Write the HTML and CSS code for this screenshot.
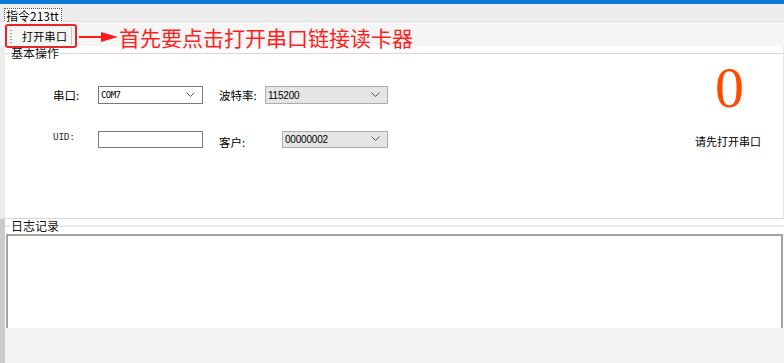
FILE: index.html
```html
<!DOCTYPE html>
<html>
<head>
<meta charset="utf-8">
<link rel="stylesheet" href="styles.css">
</head>
<body>
<div class="window">
  <div class="titlebar"></div>
  <div class="tabstrip"><div class="tab">指令213tt</div></div>
  <div class="toolbar">
    <div class="annot-box"><span class="grip"></span><span class="btn">打开串口</span></div>
    <svg class="arrow" width="40" height="12" viewBox="0 0 40 12"><line x1="0" y1="6" x2="26" y2="6" stroke="#ff1a1a" stroke-width="2"/><polygon points="22,1 39,6 22,11" fill="#ff1a1a"/></svg>
    <span class="annot-text">首先要点击打开串口链接读卡器</span>
  </div>
  <div class="group basic">
    <div class="legend"><span class="legend-text">基本操作</span></div>
    <div class="basic-content">
      <div class="form">
        <div class="row row1">
          <span class="label l1">串口:</span>
          <div class="combo white w1"><span>COM7</span><svg class="chev" width="9" height="6" viewBox="0 0 9 6"><polyline points="0.5,0.5 4.5,4.5 8.5,0.5" fill="none" stroke="#555" stroke-width="1"/></svg></div>
          <span class="label l2">波特率:</span>
          <div class="combo grey w2"><span>115200</span><svg class="chev" width="9" height="6" viewBox="0 0 9 6"><polyline points="0.5,0.5 4.5,4.5 8.5,0.5" fill="none" stroke="#555" stroke-width="1"/></svg></div>
        </div>
        <div class="row row2">
          <span class="label l1 uid">UID:</span>
          <div class="input w1"></div>
          <span class="label l3">客户:</span>
          <div class="combo grey w3"><span>00000002</span><svg class="chev" width="9" height="6" viewBox="0 0 9 6"><polyline points="0.5,0.5 4.5,4.5 8.5,0.5" fill="none" stroke="#555" stroke-width="1"/></svg></div>
        </div>
      </div>
      <div class="status">
        <div class="count">0</div>
        <div class="status-text">请先打开串口</div>
      </div>
    </div>
  </div>
  <div class="group log">
    <div class="legend"><span class="legend-text">日志记录</span></div>
    <div class="logbox"></div>
  </div>
  <div class="footer"></div>
</div>
</body>
</html>
```

FILE: styles.css
```css
* { box-sizing: border-box; }
html, body { margin: 0; padding: 0; }
body {
  width: 784px;
  height: 363px;
  overflow: hidden;
  background: #f3f3f3;
  font-family: "Noto Sans CJK SC", "Liberation Sans", sans-serif;
  font-size: 12px;
  color: #000;
}
.window { display: flex; flex-direction: column; height: 363px; }
.titlebar { height: 4px; background: #0a78d4; flex: none; }
.tabstrip {
  height: 18px;
  flex: none;
  background: #ececec;
  border-bottom: 1px solid #e2e2e2;
  padding: 3px 0 0 4px;
}
.tab {
  display: inline-block;
  height: 15px;
  padding: 0 2px 0 1px;
  background: #fff;
  border: 1px dotted #555;
  border-bottom: none;
  font-size: 12px;
  line-height: 14px;
}
.toolbar {
  height: 24px;
  flex: none;
  background: #f5f5f5;
  display: flex;
  align-items: center;
  padding-left: 5px;
  position: relative;
  z-index: 1;
}
.annot-box {
  display: flex;
  align-items: center;
  width: 72px;
  height: 24px;
  margin-top: 3px;
  border: 2px solid #e8262a;
  border-radius: 3px;
  padding-left: 3px;
}
.grip {
  width: 2px;
  height: 14px;
  background-image: radial-gradient(circle, #9a9a9a 0.8px, transparent 1px);
  background-size: 2px 3px;
  margin-right: 6px;
}
.btn {
  font-size: 11px;
  line-height: 14px;
  padding: 2px 4px;
  border-right: 1px solid #c8c8c8;
  letter-spacing: 0.3px;
}
.arrow { margin-left: 2px; margin-top: 5px; flex: none; }
.annot-text {
  color: #ff1f1f;
  font-size: 21px;
  line-height: 24px;
  margin-left: 0;
  margin-top: 5px;
  white-space: nowrap;
}
.group { background: #fff; }
.basic {
  height: 173px;
  flex: none;
  border-left: 5px solid #ececec;
  border-bottom: 1px solid #d6d6d6;
  border-right: 1px solid #e6e6e6;
}
.legend {
  display: flex;
  align-items: center;
  height: 12px;
  margin-top: 1px;
  font-size: 12px;
  line-height: 12px;
}
.legend::before {
  content: "";
  width: 5px;
  border-top: 1px solid #d8d8d8;
}
.legend::after {
  content: "";
  flex: 1;
  border-top: 1px solid #d8d8d8;
}
.legend-text { padding: 0 1px; color: #111; }
.basic-content { display: flex; }
.form { flex: 1; padding: 27px 0 0 48px; }
.row { display: flex; align-items: center; height: 18px; }
.row2 { margin-top: 26px; }
.label { font-size: 11.5px; white-space: nowrap; }
.l1 { width: 45px; }
.l2 { width: 46px; margin-left: 16px; }
.l3 { width: 63px; margin-left: 16px; padding-top: 5px; }
.uid { font-family: "DejaVu Sans Mono", monospace; font-size: 9.5px; color: #333; padding-bottom: 6px; letter-spacing: -0.3px; }
.combo, .input {
  height: 18px;
  display: flex;
  align-items: center;
  justify-content: space-between;
  padding: 0 7px 0 2px;
  font-family: "Liberation Sans", sans-serif;
  font-size: 10px;
}
.combo span { letter-spacing: -0.2px; }
.white { background: #fff; border: 1px solid #7a7a7a; }
.input { background: #fff; border: 1px solid #7a7a7a; height: 17px; }
.grey { background: #e5e5e5; border: 1px solid #adadad; }
.w1 { width: 105px; }
.w2 { width: 123px; }
.w3 { width: 106px; height: 17px; }
.row1 .w1 span { font-family: "DejaVu Sans Mono", monospace; font-size: 9px; letter-spacing: -0.6px; }
.status {
  width: 108px;
  margin-right: 1px;
  text-align: center;
  display: flex;
  flex-direction: column;
  align-items: center;
}
.count {
  font-family: "Liberation Serif", "DejaVu Serif", serif;
  font-size: 58px;
  line-height: 58px;
  color: #ff4a00;
  margin-left: 3px;
}
.status-text { font-size: 11px; line-height: 16px; margin-top: 16px; }
.log {
  flex: none;
  height: 109px;
  border-left: 5px solid #cbcbcb;
  padding-top: 1px;
}
.log .legend { margin-top: 0; height: 12px; }
.log .legend::before, .log .legend::after { border-top: 2px solid #e9e9e9; }
.logbox {
  height: 95px;
  margin: 2px 1px 0 1px;
  border-top: 2px solid #a3a3a3;
  border-left: 2px solid #a3a3a3;
  border-right: 2px solid #a3a3a3;
  background: #fff;
}
.footer { flex: 1; background: #f3f3f3; border-left: 5px solid #cbcbcb; }
```
